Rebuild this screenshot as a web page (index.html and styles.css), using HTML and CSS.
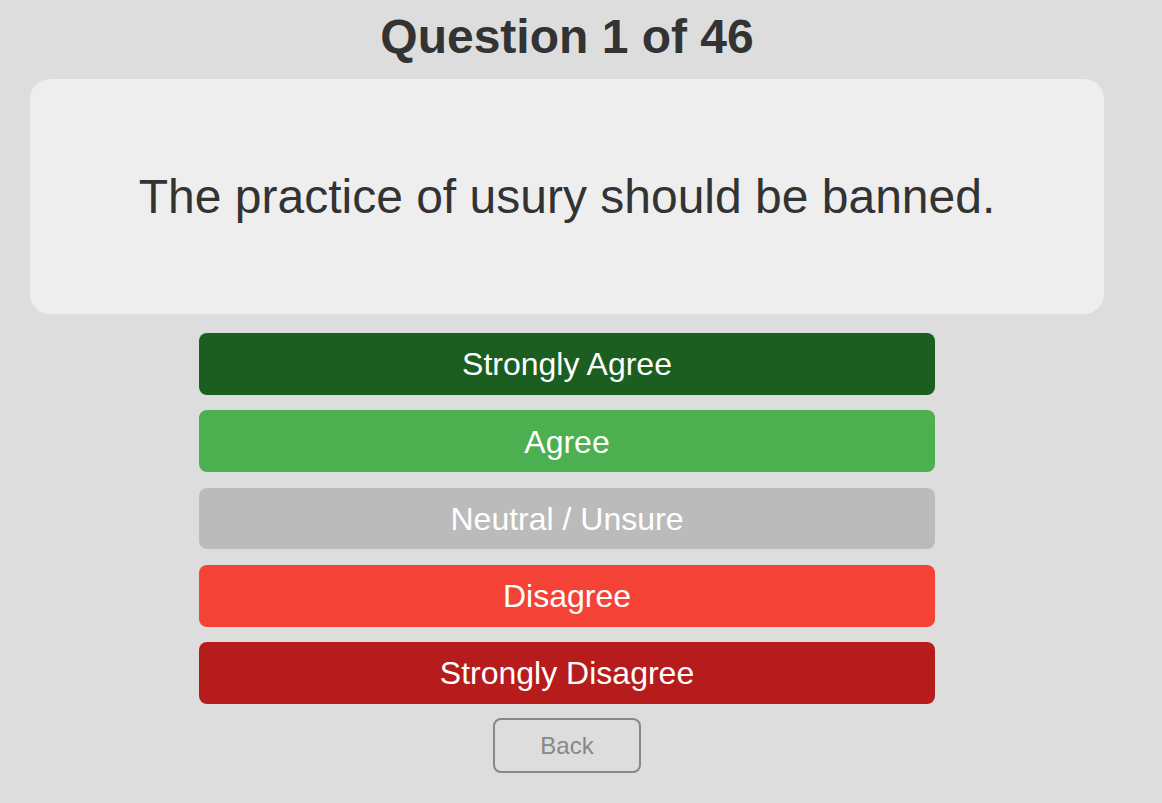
FILE: index.html
```html
<!DOCTYPE html>
<html lang="en">
<head>
    <meta charset="UTF-8">
    <title>Question 1 of 46</title>
    <link rel="stylesheet" href="styles.css">
</head>
<body>
    <div class="quiz-container">
        <h1 class="question-title">Question 1 of 46</h1>
        <div class="question-card">
            <p class="question-text">The practice of usury should be banned.</p>
        </div>
        <div class="answers">
            <button class="answer strongly-agree">Strongly Agree</button>
            <button class="answer agree">Agree</button>
            <button class="answer neutral">Neutral / Unsure</button>
            <button class="answer disagree">Disagree</button>
            <button class="answer strongly-disagree">Strongly Disagree</button>
            <button class="back-btn">Back</button>
        </div>
    </div>
</body>
</html>
```

FILE: styles.css
```css
body {
    font-family: "Liberation Sans", Arial, sans-serif;
    background-color: #dddddd;
    margin: 0;
}

.quiz-container {
    width: 1074px;
    margin-left: 30px;
}

.question-title {
    font-size: 48px;
    line-height: 55px;
    font-weight: bold;
    color: #333;
    text-align: center;
    margin: 9px 0 15px;
}

.question-card {
    background: #eeeeee;
    border-radius: 20px;
    padding: 90px 20px;
}

.question-text {
    font-size: 48px;
    line-height: 55px;
    color: #333;
    text-align: center;
    margin: 0;
}

.answers {
    width: 736px;
    margin: 19px auto 0;
    display: flex;
    flex-direction: column;
    align-items: center;
    gap: 15.6px;
}

.answer {
    width: 100%;
    height: 61.7px;
    border: none;
    border-radius: 8px;
    color: white;
    font-family: inherit;
    font-size: 32px;
    cursor: pointer;
    padding: 2px 0 0;
}

.strongly-agree { background-color: #1b5e20; }
.agree { background-color: #4caf50; }
.neutral { background-color: #bbbbbb; }
.disagree { background-color: #f44336; }
.strongly-disagree { background-color: #b71c1c; }

.back-btn {
    width: 148px;
    height: 55px;
    margin-top: -1.3px;
    background: transparent;
    border: 2px solid #888;
    border-radius: 8px;
    color: #888;
    font-family: inherit;
    font-size: 24px;
    cursor: pointer;
}
```
